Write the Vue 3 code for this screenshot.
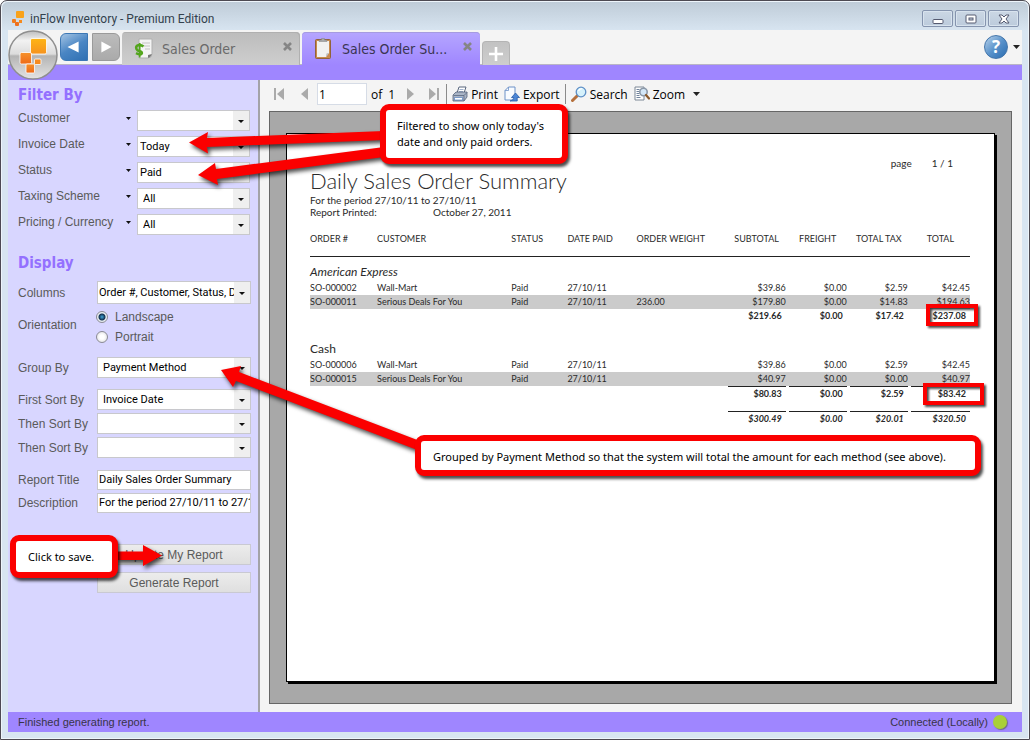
<script setup>
import { ref } from 'vue'

const filters = ref([
  { id: 'customer', label: 'Customer', value: '', inset: 'near' },
  { id: 'invoice-date', label: 'Invoice Date', value: 'Today', inset: 'near' },
  { id: 'status', label: 'Status', value: 'Paid', inset: 'near' },
  { id: 'taxing', label: 'Taxing Scheme', value: 'All', inset: 'far' },
  { id: 'pricing', label: 'Pricing / Currency', value: 'All', inset: 'far' },
])

const sorts = ref([
  { id: 'sort1', label: 'First Sort By', value: 'Invoice Date' },
  { id: 'sort2', label: 'Then Sort By', value: '' },
  { id: 'sort3', label: 'Then Sort By', value: '' },
])

const orientation = ref('landscape')
const pageNumber = ref('1')
const reportTitle = ref('Daily Sales Order Summary')
const description = ref('For the period 27/10/11 to 27/10/11')

const groups = [
  {
    name: 'American Express',
    rows: [
      ['SO-000002', 'Wall-Mart', 'Paid', '27/10/11', '', '$39.86', '$0.00', '$2.59', '$42.45'],
      ['SO-000011', 'Serious Deals For You', 'Paid', '27/10/11', '236.00', '$179.80', '$0.00', '$14.83', '$194.63'],
    ],
    totals: ['$219.66', '$0.00', '$17.42', '$237.08'],
    ruled: false,
  },
  {
    name: 'Cash',
    rows: [
      ['SO-000006', 'Wall-Mart', 'Paid', '27/10/11', '', '$39.86', '$0.00', '$2.59', '$42.45'],
      ['SO-000015', 'Serious Deals For You', 'Paid', '27/10/11', '', '$40.97', '$0.00', '$0.00', '$40.97'],
    ],
    totals: ['$80.83', '$0.00', '$2.59', '$83.42'],
    ruled: true,
  },
]
const grandTotals = ['$300.49', '$0.00', '$20.01', '$320.50']
</script>

<template>
  <div class="window">
    <header class="titlebar">
      <svg class="title-icon" viewBox="0 0 14 17" aria-hidden="true">
        <rect x="5" y="1" width="8" height="7" rx="1" fill="#f9a21b" />
        <rect x="1" y="9" width="4" height="4" rx="1" fill="#f07c1e" />
        <rect x="8" y="10" width="3" height="3" fill="#f58a1f" />
        <rect x="4" y="12" width="4" height="4" rx="1" fill="#ee701e" />
      </svg>
      <h1>inFlow Inventory - Premium Edition</h1>
      <div class="win-buttons">
        <button type="button" aria-label="Minimize">
          <svg viewBox="0 0 12 12"><rect x="1" y="6.500" width="10" height="4" rx="1" fill="#fff" stroke="#555a70" /></svg>
        </button>
        <button type="button" aria-label="Maximize">
          <svg viewBox="0 0 12 12"><rect x="1" y="2" width="10" height="8" rx="1" fill="#fff" stroke="#555a70" /><rect x="4" y="5" width="4" height="2" fill="#ccd5e2" stroke="#555a70" /></svg>
        </button>
        <button type="button" aria-label="Close">
          <svg viewBox="0 0 12 12"><path d="M1 2h3l2 2 2-2h3L8 6l3 4H8L6 8l-2 2H1l3-4z" fill="#fff" stroke="#555a70" stroke-linejoin="round" /></svg>
        </button>
      </div>
    </header>

    <div class="client">
      <div class="tabbar">
        <button type="button" class="orb" aria-label="Main menu">
          <svg viewBox="0 0 50 50">
            <defs>
              <linearGradient id="orb-fill" x1="0" y1="0" x2="0" y2="1">
                <stop offset="0" stop-color="#bdbdbd" />
                <stop offset="0.2" stop-color="#f2f2f2" />
                <stop offset="0.48" stop-color="#dcdcdc" />
                <stop offset="0.52" stop-color="#b4b4b4" />
                <stop offset="1" stop-color="#e4e4e4" />
              </linearGradient>
              <linearGradient id="orb-sq" x1="0" y1="0" x2="0" y2="1">
                <stop offset="0" stop-color="#fdb515" />
                <stop offset="1" stop-color="#f6921e" />
              </linearGradient>
              <linearGradient id="orb-sq2" x1="0" y1="0" x2="0" y2="1">
                <stop offset="0" stop-color="#f6912a" />
                <stop offset="1" stop-color="#ee6a18" />
              </linearGradient>
            </defs>
            <circle cx="25" cy="25" r="24" fill="url(#orb-fill)" stroke="#8f8f8f" stroke-width="1.500" />
            <g stroke="#fff" stroke-width="0.800">
              <rect x="22.500" y="8.500" width="16" height="15.500" rx="1.500" fill="url(#orb-sq)" />
              <rect x="12" y="22.500" width="11.500" height="11.500" rx="1.500" fill="url(#orb-sq2)" />
              <rect x="26.500" y="29" width="6.500" height="5.500" rx="1" fill="#f68a1f" />
              <rect x="18" y="34" width="8.500" height="9" rx="1" fill="url(#orb-sq2)" />
            </g>
          </svg>
        </button>
        <button type="button" class="nav-btn back" aria-label="Back">
          <svg viewBox="0 0 28 28"><path d="M19 8v12L7 14z" fill="#fff" /></svg>
        </button>
        <button type="button" class="nav-btn forward" aria-label="Forward">
          <svg viewBox="0 0 28 28"><path d="M9 8v12l11-6z" fill="#fff" /></svg>
        </button>

        <nav class="tabs" aria-label="Open documents">
          <div class="tab">
            <svg class="tab-icon" viewBox="0 0 20 22" aria-hidden="true">
              <path d="M6 1h13v15q0 4-4 4H6z" fill="#f4f4f4" stroke="#b0b0b0" />
              <path d="M9 5h8M11 8h6M12 11h5" stroke="#c4c4c4" />
              <path d="M15 20q3-1 4-4l-4 1z" fill="#777" />
              <path d="M10.500 8.500Q8 6.500 5.200 7.300T3.500 11q.8 1.700 3.200 2.200t2.100 2.300q-1 2-5.800-.4" fill="none" stroke="#53a51c" stroke-width="2.600" />
              <path d="M6.700 5v14.500" stroke="#53a51c" stroke-width="1.700" />
            </svg>
            <a href="#sales-order">Sales Order</a>
            <button type="button" class="tab-close" aria-label="Close Sales Order">
              <svg viewBox="0 0 9 9"><path d="M1 1l7 7M8 1L1 8" stroke="#858585" stroke-width="2.600" /></svg>
            </button>
          </div>
          <div class="tab active">
            <svg class="tab-icon" viewBox="0 0 20 22" aria-hidden="true">
              <rect x="2.500" y="1.500" width="15" height="19" rx="1" fill="#c98a4b" stroke="#91633a" />
              <path d="M4 3h12v12l-3 4H4z" fill="#f1f1ef" />
              <path d="M13 19l.5-3.500L16 15z" fill="#b8b8b8" />
              <path d="M6 3.500V2h2.500V.5h3V2H14v1.500z" fill="#a9a9a9" stroke="#808080" stroke-width=".5" />
            </svg>
            <a href="#summary" aria-current="page">Sales Order Su...</a>
            <button type="button" class="tab-close" aria-label="Close Sales Order Summary">
              <svg viewBox="0 0 9 9"><path d="M1 1l7 7M8 1L1 8" stroke="#858585" stroke-width="2.600" /></svg>
            </button>
          </div>
          <button type="button" class="tab-new" aria-label="New tab">
            <svg viewBox="0 0 16 16"><path d="M8 1v14M1 8h14" stroke="#fff" stroke-width="2.600" /></svg>
          </button>
        </nav>

        <button type="button" class="help" aria-label="Help">
          <span class="help-disc">?</span>
          <svg class="help-caret" viewBox="0 0 7 4"><path d="M0 0h7L3.500 4z" fill="#222" /></svg>
        </button>
      </div>
      <div class="band"></div>

      <div class="body">
        <aside class="sidebar">
          <form @submit.prevent>
            <h2>Filter By</h2>
            <div class="filters">
              <div v-for="f in filters" :key="f.id" class="filter-row">
                <label :for="f.id">{{ f.label }}</label>
                <svg class="mini-caret" viewBox="0 0 5 3" aria-hidden="true"><path d="M0 0h5L2.500 3z" fill="#111" /></svg>
                <span class="pick" :class="f.inset">
                  <select :id="f.id" v-model="f.value"><option>{{ f.value }}</option></select>
                </span>
              </div>
            </div>

            <h2 class="display-heading">Display</h2>
            <div class="row columns">
              <label for="columns">Columns</label>
              <span class="pick tall tight"><select id="columns"><option>Order #, Customer, Status, Date Paid</option></select></span>
            </div>
            <div class="row orientation" role="radiogroup" aria-labelledby="orientation-label">
              <span id="orientation-label" class="lbl">Orientation</span>
              <span class="radios">
                <label><input v-model="orientation" type="radio" name="orientation" value="landscape">Landscape</label>
                <label><input v-model="orientation" type="radio" name="orientation" value="portrait">Portrait</label>
              </span>
            </div>
            <div class="row group">
              <label for="group-by">Group By</label>
              <span class="pick"><select id="group-by"><option>Payment Method</option></select></span>
            </div>
            <div class="sorts">
              <div v-for="s in sorts" :key="s.id" class="row">
                <label :for="s.id">{{ s.label }}</label>
                <span class="pick"><select :id="s.id" v-model="s.value"><option>{{ s.value }}</option></select></span>
              </div>
            </div>
            <div class="texts">
              <div class="row">
                <label for="report-title">Report Title</label>
                <input id="report-title" v-model="reportTitle" type="text">
              </div>
              <div class="row">
                <label for="description">Description</label>
                <input id="description" v-model="description" type="text">
              </div>
            </div>
            <div class="actions">
              <button type="button">Update My Report</button>
              <button type="button">Generate Report</button>
            </div>
          </form>
        </aside>

        <main class="report-pane">
          <div class="toolbar" role="toolbar" aria-label="Report">
            <button type="button" class="glyph first" aria-label="First page">
              <svg viewBox="0 0 11 12"><rect width="2" height="12" fill="#aaa" /><path d="M10 0v12L3 6z" fill="#aaa" /></svg>
            </button>
            <button type="button" class="glyph prev" aria-label="Previous page">
              <svg viewBox="0 0 11 12"><path d="M8 0v12L1 6z" fill="#aaa" /></svg>
            </button>
            <input v-model="pageNumber" class="page-no" type="text" aria-label="Page number">
            <span class="of"><span>of</span><span>1</span></span>
            <button type="button" class="glyph next" aria-label="Next page">
              <svg viewBox="0 0 11 12"><path d="M2 0v12l7-6z" fill="#aaa" /></svg>
            </button>
            <button type="button" class="glyph last" aria-label="Last page">
              <svg viewBox="0 0 11 12"><rect x="9" width="2" height="12" fill="#aaa" /><path d="M1 0v12l7-6z" fill="#aaa" /></svg>
            </button>
            <span class="sep"></span>
            <button type="button" class="tool print">
              <svg viewBox="0 0 16 16">
                <path d="M5 7l2-6h7l-2 6z" fill="#fff" stroke="#58667c" />
                <path d="M7.500 3.500h4M7 5.500h4" stroke="#8aa0c0" stroke-width=".8" />
                <path d="M1 9l3-3h11v5l-3 4H1z" fill="#a9b4c6" stroke="#56637a" stroke-width=".8" />
                <path d="M1.500 9.500H12L15 6.500M12 9.500V15" fill="none" stroke="#5b6880" stroke-width=".8" />
                <path d="M2.500 11.500h8V14h-8z" fill="#fff" stroke="#4272b8" stroke-width=".6" />
              </svg>Print
            </button>
            <button type="button" class="tool export">
              <svg viewBox="0 0 16 16">
                <path d="M4.500 1H11v13H1V4.500z" fill="#f8fbff" stroke="#6d92c8" />
                <path d="M4.500 1v3.500H1" fill="none" stroke="#6d92c8" stroke-width=".8" />
                <path d="M11.500 7l4 4.500h-2.300V15H6q3.500-.5 3.800-3.500H7.500z" fill="#4c86d6" stroke="#245ba8" stroke-width=".8" />
              </svg>Export
            </button>
            <span class="sep second"></span>
            <button type="button" class="tool search">
              <svg viewBox="0 0 16 16">
                <path d="M1.500 14.500l5-5" stroke="#b5703c" stroke-width="3" stroke-linecap="round" />
                <circle cx="10" cy="6" r="4.800" fill="#d5f1fb" stroke="#5d8fc6" stroke-width="1.300" />
                <path d="M7.500 5q1-2.300 3.500-2.300" fill="none" stroke="#fff" stroke-width="1.300" />
              </svg>Search
            </button>
            <button type="button" class="tool zoom">
              <svg viewBox="0 0 16 16">
                <path d="M1 1h9v13H1z" fill="#fff" stroke="#7d8896" />
                <path d="M2.500 3.500h3M2.500 5.500h3M2.500 7.500h3M2.500 9.500h3M2.500 11.500h4" stroke="#72849d" />
                <circle cx="9.500" cy="6" r="3.700" fill="#d4e7f7" stroke="#8b98a8" stroke-width="1.600" />
                <path d="M12 9l3 3.500" stroke="#8b5a2c" stroke-width="2.200" stroke-linecap="round" />
              </svg>Zoom
              <svg class="drop" viewBox="0 0 7 4"><path d="M0 0h7L3.500 4z" fill="#222" /></svg>
            </button>
          </div>

          <div class="viewer">
            <article class="paper">
              <p class="page-info"><span>page</span><span>1 / 1</span></p>
              <h2>Daily Sales Order Summary</h2>
              <p class="period">For the period 27/10/11 to 27/10/11</p>
              <p class="printed"><span>Report Printed:</span><span>October 27, 2011</span></p>
              <table>
                <colgroup>
                  <col class="c-order"><col class="c-customer"><col class="c-status"><col class="c-date"><col class="c-weight">
                  <col class="c-money"><col class="c-money"><col class="c-money"><col class="c-total">
                </colgroup>
                <thead>
                  <tr>
                    <th>ORDER #</th><th>CUSTOMER</th><th>STATUS</th><th>DATE PAID</th><th>ORDER WEIGHT</th>
                    <th class="num"><div>SUBTOTAL</div></th><th class="num"><div>FREIGHT</div></th>
                    <th class="num"><div>TOTAL TAX</div></th><th class="num"><div>TOTAL</div></th>
                  </tr>
                </thead>
                <tbody v-for="g in groups" :key="g.name">
                  <tr class="group-name"><th colspan="9">{{ g.name }}</th></tr>
                  <tr v-for="(r, ri) in g.rows" :key="r[0]" :class="{ shaded: ri % 2 }">
                    <td v-for="(c, ci) in r" :key="ci" :class="{ num: ci > 4 }"><div>{{ c }}</div></td>
                  </tr>
                  <tr class="totals" :class="{ ruled: g.ruled }">
                    <td colspan="5"></td>
                    <td v-for="(t, ti) in g.totals" :key="ti" class="num"><div>{{ t }}</div></td>
                  </tr>
                </tbody>
                <tfoot>
                  <tr class="totals ruled grand">
                    <td colspan="5"></td>
                    <td v-for="(t, ti) in grandTotals" :key="ti" class="num"><div>{{ t }}</div></td>
                  </tr>
                </tfoot>
              </table>
            </article>
          </div>
        </main>
      </div>

      <footer class="status">
        <span>Finished generating report.</span>
        <span class="conn">Connected (Locally)<i class="dot"></i></span>
      </footer>
    </div>

    <svg class="arrows" width="1030" height="740" viewBox="0 0 1030 740" aria-hidden="true">
      <g fill="#fb0000">
        <path d="M189 142.500L208 132L207 138L384 131V140L207 147L208 153.500z" />
        <path d="M198 175L215 163L216 169L384 147V157L217 179L218 185z" />
        <path d="M221 370L241 366L239 372L420 441V451L236 381L233 387z" />
        <path d="M116 551.500H143V545L162 555.500L143 566V560H116z" />
      </g>
    </svg>
    <div class="mark mark-amex"></div>
    <div class="mark mark-cash"></div>
    <div class="callout note-filter">Filtered to show only today's<br>date and only paid orders.</div>
    <div class="callout note-group">Grouped by Payment Method so that the system will total the amount for each method (see above).</div>
    <div class="callout note-save">Click to save.</div>
  </div>
</template>

<style>
body {
  margin: 0;
  background: #fff;
}
</style>

<style scoped>
* {
  box-sizing: border-box;
}
h1, h2, p {
  margin: 0;
  font-weight: 400;
}
button, select, input {
  font: inherit;
  color: inherit;
  margin: 0;
}
button {
  padding: 0;
  border: 0;
  background: none;
}
svg {
  display: block;
  flex: none;
}
.window {
  position: relative;
  display: flex;
  flex-direction: column;
  min-height: 100vh;
  padding: 0 7px 7px;
  border: 1px solid #4d4a52;
  border-radius: 7px 7px 0 0;
  background: #d8e5f1;
  box-shadow: inset 0 0 0 1px #eef5fb;
  font-family: "Open Sans", "Noto Sans", sans-serif;
}
.titlebar {
  display: flex;
  align-items: center;
  height: 29px;
  margin: 1px -6px -1px;
  padding: 4px 9px 0 9px;
  border-radius: 6px 6px 0 0;
  background: linear-gradient(#bfccd8, #d8e5f1);
}
.title-icon {
  width: 14px;
  height: 17px;
}
h1 {
  margin-left: 5px;
  font-family: Roboto, sans-serif;
  font-size: 12px;
  line-height: 18px;
  color: #33414d;
}
.win-buttons {
  display: flex;
  gap: 2px;
  margin-left: auto;
}
.win-buttons button {
  display: grid;
  place-items: center;
  width: 31px;
  height: 17px;
  border: 1px solid #8594ae;
  border-radius: 2px;
  background: linear-gradient(#cbd7e4, #bccbdc);
  box-shadow: inset 0 0 0 1px #d8e3ee;
}
.win-buttons svg {
  width: 12px;
  height: 12px;
}
.client {
  display: flex;
  flex: 1;
  flex-direction: column;
  background: #f4f4f4;
}
.tabbar {
  display: flex;
  align-items: flex-start;
  height: 35px;
  border-bottom: 1px solid #b9b5c6;
}
.orb {
  z-index: 1;
  width: 50px;
  height: 50px;
}
.orb svg {
  width: 50px;
  height: 50px;
}
.nav-btn {
  width: 28px;
  height: 28px;
  margin: 3px 0 0 2px;
  border: 1px solid #3d78b5;
}
.nav-btn svg {
  width: 26px;
  height: 26px;
}
.back {
  border-radius: 6px 0 0 6px;
  background: linear-gradient(150deg, #a4c4e4, #4a86c4 50%, #2f70b3);
}
.forward {
  margin-left: 4px;
  border-color: #9a9a9a;
  border-radius: 0 6px 6px 0;
  background: linear-gradient(#bcbcbc, #aaa);
}
.tabs {
  display: flex;
  align-items: flex-end;
  gap: 2px;
  height: 35px;
  margin-left: 2px;
}
.tab {
  display: flex;
  align-items: center;
  width: 178px;
  height: 33px;
  padding: 0 6px 0 11px;
  border-radius: 4px 4px 0 0;
  background: linear-gradient(#bcbcbc, #cecece);
  box-shadow: inset -1px 1px 0 #b0b0b0;
  color: #6a6a6a;
  font-family: "DejaVu Sans Condensed", sans-serif;
  font-size: 14px;
}
.tab.active {
  background: linear-gradient(#b5a6ff, #9f86ff);
  box-shadow: inset 0 1px 0 #a69be0;
  color: #3a3552;
}
.tab a {
  margin-left: 9px;
  color: inherit;
  text-decoration: none;
}
.tab-icon {
  width: 20px;
  height: 22px;
}
.tab-close {
  margin: 0 2px 5px auto;
}
.tab-close svg {
  width: 9px;
  height: 9px;
}
.tab-new {
  display: grid;
  place-items: center;
  width: 28px;
  height: 24px;
  border: 1px solid #b4b4b4;
  border-bottom: 0;
  border-radius: 4px 4px 0 0;
  background: linear-gradient(#c2c2c2, #cecece);
}
.tab-new svg {
  width: 16px;
  height: 16px;
}
.help {
  display: flex;
  align-items: center;
  gap: 5px;
  margin: 5px 2px 0 auto;
}
.help-disc {
  width: 24px;
  height: 24px;
  border: 1px solid #4476ab;
  border-radius: 50%;
  background: linear-gradient(135deg, #b9d2ea, #5a93cb 50%, #2a6cb0);
  color: #fff;
  font-size: 17px;
  font-weight: 700;
  line-height: 22px;
}
.help-caret {
  width: 7px;
  height: 4px;
}
.band {
  height: 15px;
  background: #9f86ff;
}
.body {
  display: flex;
  flex: 1;
}

/* Sidebar */
.sidebar {
  width: 252px;
  flex: none;
  padding: 5px 7px 0 10px;
  border-right: 2px solid #a3a3a8;
  background: #d8d6ff;
  color: #5a5a5a;
  font-family: "Liberation Sans", Arial, sans-serif;
  font-size: 12px;
  line-height: 16px;
}
.sidebar h2 {
  color: #9470ff;
  font-family: "DejaVu Sans Condensed", sans-serif;
  font-size: 15px;
  font-weight: 700;
  line-height: 20px;
}
.filters {
  display: grid;
  gap: 5px;
  margin-top: 5px;
}
.filter-row {
  display: grid;
  grid-template-columns: 108px 11px 1fr;
  height: 21px;
  padding-right: 1px;
}
.mini-caret {
  width: 5px;
  height: 3px;
  margin-top: 7px;
}
.pick {
  position: relative;
  display: flex;
  height: 21px;
  border: 1px solid #c8c8cc;
  background: #fff;
}
.pick.tall {
  height: 23px;
}
.pick::before {
  content: "";
  position: absolute;
  inset: 0 0 0 auto;
  width: 16px;
  background: #efefef;
}
.pick::after {
  content: "";
  position: absolute;
  top: calc(50% - 1px);
  right: 5px;
  border: 3px solid transparent;
  border-top-color: #111;
  border-bottom: 0;
}
.pick select {
  flex: 1;
  min-width: 0;
  width: 100%;
  margin-right: 16px;
  padding: 0 0 0 5px;
  border: 0;
  border-radius: 0;
  background: transparent;
  appearance: none;
  color: #000;
  font-family: Roboto, sans-serif;
  font-size: 11px;
  text-overflow: clip;
}
.pick.near select {
  padding-left: 2px;
}
.pick.tight select {
  padding-left: 1px;
}
.display-heading {
  margin-top: 18px;
}
.row {
  display: grid;
  grid-template-columns: 79px 1fr;
  align-items: center;
}
.columns {
  margin-top: 8px;
}
.orientation {
  margin-top: 5px;
}
.lbl {
  padding-bottom: 4px;
}
.radios {
  display: grid;
  gap: 4px;
}
.radios label {
  display: flex;
  align-items: center;
  gap: 7px;
}
.radios input {
  width: 12px;
  height: 12px;
  margin: 0 0 0 -1px;
  border: 1px solid #8b8b95;
  border-radius: 50%;
  background: radial-gradient(circle, #fff 30%, #d8d8dc);
  appearance: none;
}
.radios input:checked {
  background: radial-gradient(circle, #3fa6d8 0, #12304f 3px, #e8eef2 4px);
}
.group {
  margin-top: 12px;
}
.sorts {
  display: grid;
  gap: 3px;
  margin-top: 11px;
}
.texts {
  display: grid;
  gap: 3px;
  margin-top: 12px;
}
.texts input {
  width: 100%;
  height: 20px;
  padding: 0 0 2px 1px;
  border: 1px solid #c8c8cc;
  background: #fff;
  color: #000;
  font-family: Roboto, sans-serif;
  font-size: 11px;
}
.actions {
  display: grid;
  gap: 7px;
  margin: 31px 0 0 79px;
}
.actions button {
  height: 21px;
  border: 1px solid #c9c9d2;
  background: linear-gradient(#ececec, #dfdfdf);
}

/* Report pane */
.report-pane {
  display: flex;
  flex: 1;
  flex-direction: column;
  min-width: 0;
  padding: 0 10px 8px 9px;
}
.toolbar {
  display: flex;
  align-items: center;
  height: 31px;
  padding: 0 0 3px 5px;
  color: #000;
  font-size: 12px;
}
.glyph svg {
  width: 11px;
  height: 12px;
}
.prev {
  margin-left: 15px;
}
.next {
  margin-left: 10px;
}
.last {
  margin-left: 12px;
}
.page-no {
  width: 50px;
  height: 22px;
  margin-left: 6px;
  padding: 0 1px;
  border: 1px solid #d6dce6;
  background: #fff;
}
.of {
  display: flex;
  gap: 6px;
  margin-left: 4px;
}
.sep {
  width: 1px;
  height: 20px;
  margin: 0 5px 0 7px;
  background: #8a8a8a;
}
.sep.second {
  margin-left: 5px;
}
.tool {
  display: flex;
  align-items: center;
  gap: 3px;
}
.tool svg {
  width: 16px;
  height: 16px;
}
.export, .zoom {
  margin-left: 6px;
}
.tool .drop {
  width: 7px;
  height: 4px;
  margin-left: 5px;
}
.viewer {
  display: flex;
  flex: 1;
  padding: 21px 16px 21px 16px;
  border: 1px solid #666;
  background: #a8a8a8;
}
.paper {
  flex: 1;
  min-width: 0;
  padding: 23px 24px 0 23px;
  border: 1px solid #000;
  background: #fff;
  box-shadow: 2px 2px 0 #000;
  color: #2a2a2a;
  font-family: Lato, sans-serif;
  font-size: 10px;
  line-height: 12px;
}
.page-info {
  display: flex;
  justify-content: flex-end;
  gap: 20px;
  padding-right: 17px;
}
.paper h2 {
  font-size: 22px;
  font-weight: 300;
  line-height: 24px;
}
.period {
  margin-top: 1px;
}
.printed {
  display: grid;
  grid-template-columns: 123px 1fr;
}
table {
  width: 100%;
  margin-top: 14px;
  border-collapse: collapse;
  table-layout: fixed;
  line-height: 14px;
  font-size: 9px;
}
.c-order { width: 67px; }
.c-customer { width: 134px; }
.c-status { width: 56px; }
.c-date { width: 69px; }
.c-weight { width: 91px; }
.c-money { width: 61px; }
.c-total { width: 59px; }
th, td {
  padding: 0;
  font-weight: 400;
  text-align: left;
  white-space: nowrap;
}
.num div {
  margin-right: 3px;
  text-align: right;
}
.num:last-child div {
  margin-right: 0;
}
thead th {
  height: 24px;
  vertical-align: top;
  border-bottom: 1px solid #222;
}
thead .num div {
  text-align: center;
}
.group-name th {
  height: 25px;
  padding-top: 6px;
  font-size: 12px;
  font-style: italic;
}
tbody + tbody .group-name th {
  height: 35px;
  padding-top: 16px;
  font-style: normal;
}
.shaded {
  background: #cbcbcb;
}
.totals div {
  padding-right: 4px;
  font-weight: 700;
}
.ruled div {
  border-top: 1px solid #222;
}
.grand div {
  margin-top: 10px;
  font-style: italic;
}

.status {
  display: flex;
  align-items: center;
  justify-content: space-between;
  height: 20px;
  padding: 0 15px 0 10px;
  background: #9f86ff;
  color: #383447;
  font-family: "Liberation Sans", Arial, sans-serif;
  font-size: 11px;
}
.conn {
  display: flex;
  align-items: center;
  gap: 5px;
}
.dot {
  width: 14px;
  height: 14px;
  border-radius: 50%;
  background: #a9cf38;
  box-shadow: 1px 1px 1px #6f6a86;
}

/* Annotations laid over the window */
.arrows {
  position: absolute;
  top: -1px;
  left: -1px;
  z-index: 2;
  pointer-events: none;
  filter: drop-shadow(2px 3px 2px rgba(0, 0, 0, 0.7));
}
.callout {
  position: absolute;
  z-index: 3;
  border: 6px solid #fb0000;
  border-radius: 9px;
  background: #fff;
  box-shadow: 2px 3px 3px rgba(0, 0, 0, 0.7);
  color: #000;
  font-family: "Noto Sans", "Open Sans", sans-serif;
  font-size: 11px;
  line-height: 16px;
  white-space: nowrap;
}
.note-filter {
  top: 103px;
  left: 379px;
  min-width: 188px;
  padding: 8px 11px;
}
.note-group {
  top: 434px;
  left: 414px;
  min-width: 566px;
  padding: 8px 12px 5px;
}
.note-save {
  top: 534px;
  left: 9px;
  min-width: 108px;
  padding: 8px 12px 7px;
}
.mark {
  position: absolute;
  z-index: 2;
  border: 4px solid #fb0000;
  filter: drop-shadow(2px 2px 1px rgba(0, 0, 0, 0.7));
}
.mark-amex {
  top: 303px;
  left: 925px;
  width: 52px;
  height: 22px;
}
.mark-cash {
  top: 382px;
  left: 922px;
  width: 61px;
  height: 22px;
}
</style>
